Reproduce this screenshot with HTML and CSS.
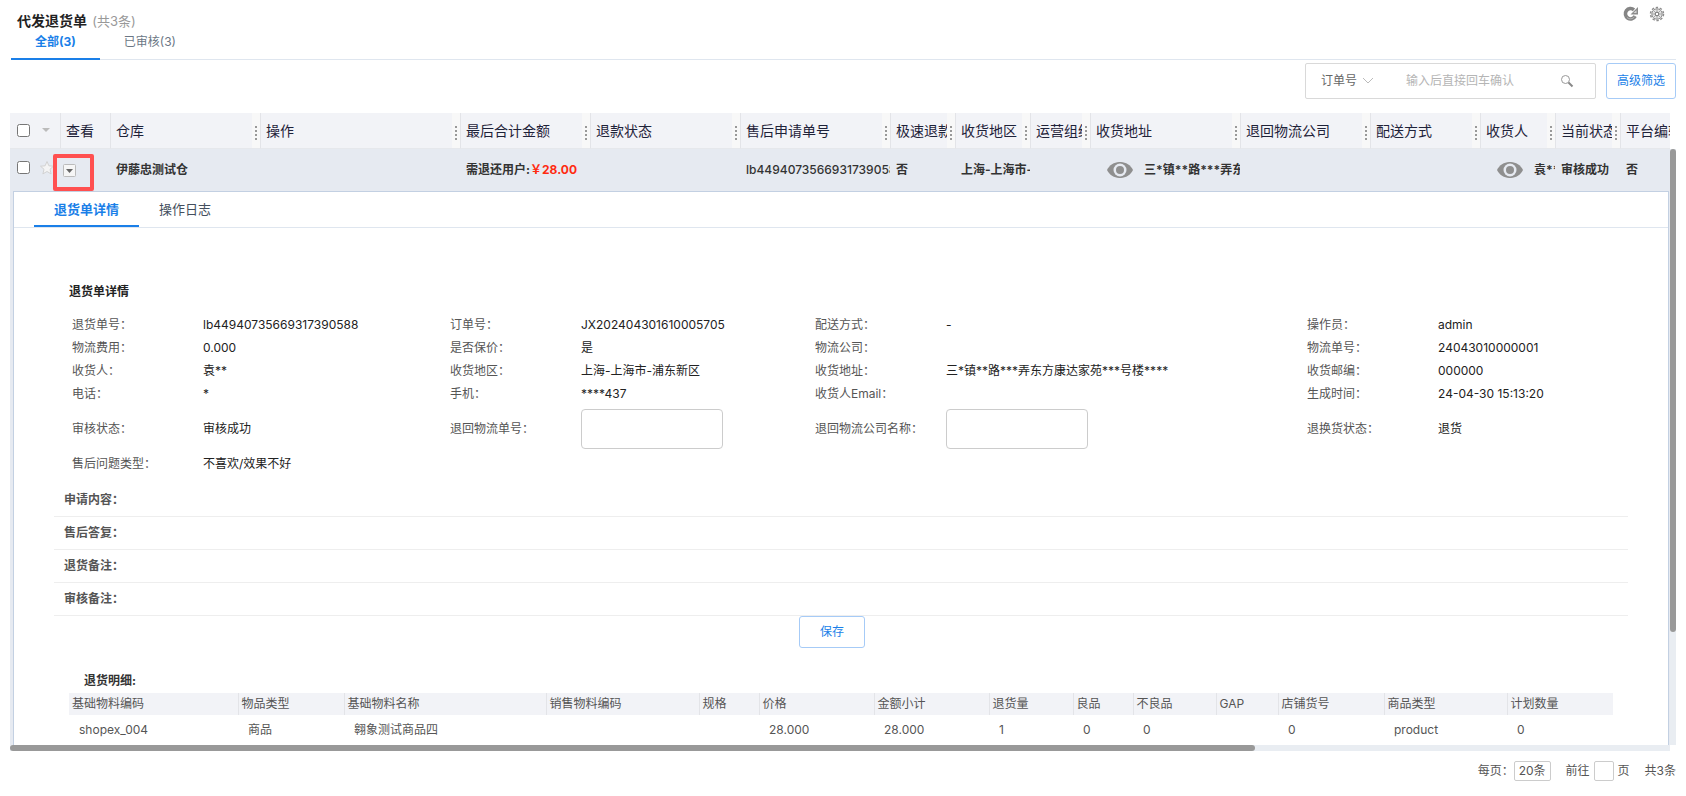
FILE: index.html
```html
<!DOCTYPE html>
<html lang="zh-CN">
<head>
    <meta charset="UTF-8">
    <meta name="viewport" content="width=device-width, initial-scale=1.0">
    <title>代发退货单</title>
    <link rel="stylesheet" href="styles.css">
</head>
<body>
    <header class="pageHead">
        <h1>代发退货单 <small>(共3条)</small></h1>
        <div class="pageTools">
            <button type="button" aria-label="刷新">
                <svg width="16" height="16" viewBox="0 0 16 16"><path d="M12.200 10.200A5.200 5.200 0 1 1 11 3.800" fill="none" stroke="#858585" stroke-width="3.600"/><path d="M11.500 10.800A5 5 0 0 1 4 11.500" fill="none" stroke="#b5b5b5"/><path d="M15 1v7.500H7.500z" fill="#8c8c8c"/><path d="M13.500 4.200v2.800h-3z" fill="#d5d5d5"/></svg>
            </button>
            <button type="button" aria-label="设置">
                <svg width="16" height="16" viewBox="0 0 16 16"><circle cx="8" cy="8" r="6.500" fill="none" stroke="#8c8c8c" stroke-width="1.500" stroke-dasharray="2.400 1.680"/><circle cx="8" cy="8" r="5.200" fill="#e4e4e4" stroke="#909090"/><path d="M8 3v10M3 8h10M4.500 4.500l7 7M11.500 4.500l-7 7" stroke="#aaa"/><circle cx="8" cy="8" r="1.800" fill="#fff" stroke="#777"/></svg>
            </button>
        </div>
    </header>
    <nav class="tabs">
        <a class="active" href="#">全部(3)</a>
        <a href="#">已审核(3)</a>
    </nav>
    <form class="filters">
        <div class="searchBox">
            <button class="searchType" type="button">订单号
                <svg width="12" height="8" viewBox="0 0 12 8"><path d="M1 1l5 5 5-5" fill="none" stroke="#bbb"/></svg>
            </button>
            <input type="text" aria-label="订单号" placeholder="输入后直接回车确认">
            <button class="searchGo" type="submit" aria-label="搜索">
                <svg width="14" height="14" viewBox="0 0 14 14"><circle cx="5.5" cy="5.5" r="4" fill="none" stroke="#999"/><path d="M8.5 8.5l4 4" stroke="#888" stroke-width="2"/></svg>
            </button>
        </div>
        <button class="btn btnFilter" type="button">高级筛选</button>
    </form>

    <div class="finder">
        <div class="finderView">
            <table class="grid">
                <colgroup>
                    <col class="w50"><col class="w50"><col class="w150"><col class="w200"><col class="w130"><col class="w150"><col class="w150"><col class="w65"><col class="w75"><col class="w60"><col class="w150"><col class="w130"><col class="w110"><col class="w75"><col class="w65"><col>
                </colgroup>
                <thead>
                    <tr>
                        <th class="pick"><div><input type="checkbox" aria-label="全选"><svg width="8" height="5" viewBox="0 0 8 5"><path d="M0 0h8L4 4z" fill="#bbb"/></svg></div></th>
                        <th>查看</th>
                        <th class="sizable">仓库</th>
                        <th class="sizable">操作</th>
                        <th class="sizable">最后合计金额</th>
                        <th class="sizable">退款状态</th>
                        <th class="sizable">售后申请单号</th>
                        <th class="sizable">极速退款</th>
                        <th class="sizable">收货地区</th>
                        <th class="sizable">运营组织</th>
                        <th class="sizable">收货地址</th>
                        <th class="sizable">退回物流公司</th>
                        <th class="sizable">配送方式</th>
                        <th class="sizable">收货人</th>
                        <th class="sizable">当前状态</th>
                        <th>平台编辑</th>
                    </tr>
                </thead>
                <tbody>
                    <tr>
                        <td class="pick"><div><input type="checkbox" aria-label="选择"><svg width="16" height="16" viewBox="0 0 16 16"><path d="M8 1.5l1.900 4.300 4.600.4-3.500 3.100 1.100 4.600L8 11.500l-4.100 2.400 1.100-4.600L1.500 6.200l4.600-.4z" fill="#f4f4f4" stroke="#d2d2d2"/></svg></div></td>
                        <td class="look"><button class="expand" type="button" aria-label="查看"><svg width="13" height="13" viewBox="0 0 13 13"><rect x=".5" y=".5" width="12" height="12" rx="1" fill="#f6f6f6" stroke="#bbb"/><path d="M3 5h7L6.500 9z" fill="#666"/></svg></button><span class="mark"></span></td>
                        <td>伊藤忠测试仓</td>
                        <td></td>
                        <td>需退还用户:<span class="price">￥28.00</span></td>
                        <td></td>
                        <td class="bn">lb44940735669317390588</td>
                        <td>否</td>
                        <td>上海-上海市-浦东新区</td>
                        <td></td>
                        <td><div class="masked"><svg width="26" height="16" viewBox="0 0 26 16"><path d="M0 8C5-2.700 21-2.700 26 8 21 18.700 5 18.700 0 8z" fill="#8f8f8f"/><circle cx="13" cy="8" r="6.500" fill="#e6eaf1"/><circle cx="13" cy="8" r="4" fill="#8f8f8f"/></svg>三*镇**路***弄东方康达家苑***号楼****</div></td>
                        <td></td>
                        <td></td>
                        <td><div class="masked"><svg width="26" height="16" viewBox="0 0 26 16"><path d="M0 8C5-2.700 21-2.700 26 8 21 18.700 5 18.700 0 8z" fill="#8f8f8f"/><circle cx="13" cy="8" r="6.500" fill="#e6eaf1"/><circle cx="13" cy="8" r="4" fill="#8f8f8f"/></svg>袁**</div></td>
                        <td>审核成功</td>
                        <td>否</td>
                    </tr>
                </tbody>
            </table>

            <section class="detail">
                <nav class="detailTabs">
                    <a class="active" href="#">退货单详情</a>
                    <a href="#">操作日志</a>
                </nav>
                <div class="detailBody">
                    <h2>退货单详情</h2>
                    <table class="info">
                        <colgroup>
                            <col class="infoLabel"><col class="infoA"><col class="infoLabel"><col class="infoB"><col class="infoLabel"><col class="infoC"><col class="infoLabel"><col>
                        </colgroup>
                        <tr>
                            <th>退货单号：</th><td>lb44940735669317390588</td>
                            <th>订单号：</th><td>JX202404301610005705</td>
                            <th>配送方式：</th><td>-</td>
                            <th>操作员：</th><td>admin</td>
                        </tr>
                        <tr>
                            <th>物流费用：</th><td>0.000</td>
                            <th>是否保价：</th><td>是</td>
                            <th>物流公司：</th><td></td>
                            <th>物流单号：</th><td>24043010000001</td>
                        </tr>
                        <tr>
                            <th>收货人：</th><td>袁**</td>
                            <th>收货地区：</th><td>上海-上海市-浦东新区</td>
                            <th>收货地址：</th><td>三*镇**路***弄东方康达家苑***号楼****</td>
                            <th>收货邮编：</th><td>000000</td>
                        </tr>
                        <tr>
                            <th>电话：</th><td>*</td>
                            <th>手机：</th><td>****437</td>
                            <th>收货人Email：</th><td></td>
                            <th>生成时间：</th><td>24-04-30 15:13:20</td>
                        </tr>
                        <tr class="inputs">
                            <th>审核状态：</th><td>审核成功</td>
                            <th><label for="logiNo">退回物流单号：</label></th><td><input type="text" id="logiNo"></td>
                            <th><label for="logiName">退回物流公司名称：</label></th><td><input type="text" id="logiName"></td>
                            <th>退换货状态：</th><td>退货</td>
                        </tr>
                        <tr>
                            <th>售后问题类型：</th><td colspan="7">不喜欢/效果不好</td>
                        </tr>
                    </table>
                    <ul class="notes">
                        <li>申请内容：</li>
                        <li>售后答复：</li>
                        <li>退货备注：</li>
                        <li>审核备注：</li>
                    </ul>
                    <div class="actions"><button class="btn btnSave" type="button">保存</button></div>
                    <h3>退货明细:</h3>
                    <table class="items">
                        <colgroup>
                            <col class="w169"><col class="w106"><col class="w202"><col class="w153"><col class="w60"><col class="w115"><col class="w115"><col class="w84"><col class="w60"><col class="w83"><col class="w62"><col class="w106"><col class="w123"><col>
                        </colgroup>
                        <thead>
                            <tr>
                                <th>基础物料编码</th><th>物品类型</th><th>基础物料名称</th><th>销售物料编码</th><th>规格</th><th>价格</th><th>金额小计</th><th>退货量</th><th>良品</th><th>不良品</th><th>GAP</th><th>店铺货号</th><th>商品类型</th><th>计划数量</th>
                            </tr>
                        </thead>
                        <tbody>
                            <tr>
                                <td>shopex_004</td><td>商品</td><td>翱象测试商品四</td><td></td><td></td><td>28.000</td><td>28.000</td><td>1</td><td>0</td><td>0</td><td></td><td>0</td><td>product</td><td>0</td>
                            </tr>
                        </tbody>
                    </table>
                </div>
            </section>
        </div>
        <div class="scrollY"><div></div></div>
        <div class="scrollX"><div></div></div>
    </div>

    <footer class="pager">
        <div class="pageSize"><span>每页：</span><button type="button">20条</button></div>
        <div><label for="pageNo">前往</label><input type="text" id="pageNo"><span>页</span></div>
        <span>共3条</span>
    </footer>
</body>
</html>
```
FILE: styles.css
```css
* {
    box-sizing: border-box;
}
body {
    margin: 0;
    padding: 0 10px;
    background-color: #fff;
    color: #222;
    font: 12px/18px Inter, "Noto Sans CJK SC", sans-serif;
}
button, input {
    font: inherit;
    color: inherit;
    margin: 0;
}
button {
    padding: 0;
    border: 0;
    background: none;
}
a {
    text-decoration: none;
    color: inherit;
}
svg {
    display: block;
    flex: none;
}
table {
    width: 100%;
    border-collapse: collapse;
    table-layout: fixed;
}
th, td {
    padding: 0;
    text-align: left;
    white-space: nowrap;
}

/* title */
.pageHead {
    display: flex;
    justify-content: space-between;
    padding: 6px 11px 0 7px;
    height: 32px;
}
.pageHead h1 {
    margin: 0;
    padding-top: 5px;
    font-size: 14px;
    line-height: 20px;
}
.pageHead small {
    margin-left: 2px;
    font-size: 13px;
    font-weight: normal;
    color: #999;
}
.pageTools {
    display: flex;
    gap: 10px;
    height: 16px;
}
.tabs {
    display: flex;
    height: 28px;
    margin-left: 1px;
    border-bottom: 1px solid #dfe6ef;
    color: #6b7785;
}
.tabs a {
    height: 28px;
    padding: 0 24px;
    line-height: 20px;
}
.tabs .active, .detailTabs .active {
    border-bottom: 2px solid #1a7fe8;
    color: #1a7fe8;
    font-weight: bold;
}

/* search */
.filters {
    display: flex;
    justify-content: flex-end;
    align-items: center;
    gap: 10px;
    padding: 3px 0 14px;
}
.searchBox {
    display: flex;
    align-items: center;
    width: 291px;
    height: 36px;
    padding: 0 21px 0 15px;
    border: 1px solid #d9d9d9;
    border-radius: 2px;
}
.searchType {
    display: flex;
    align-items: center;
    gap: 5px;
    color: #666;
}
.searchBox input {
    flex: 1;
    min-width: 0;
    padding: 0 0 0 32px;
    border: 0;
    outline: 0;
}
.searchBox input::placeholder {
    color: #b5b5b5;
}
.btn {
    border: 1px solid #a6cbf7;
    border-radius: 3px;
    background-color: #fff;
    color: #1a7fe8;
}
.btnFilter {
    width: 70px;
    height: 36px;
}
.btnSave {
    width: 66px;
    height: 32px;
}

/* list */
.finder {
    display: grid;
    grid-template-columns: minmax(0, 1fr) 6px;
    grid-template-rows: auto 6px;
}
.finderView {
    overflow: hidden;
    background-color: #e6eaf1;
}
.scrollY {
    margin-top: 36px;
    background-color: #e9edf2;
}
.scrollY div {
    height: 81%;
    border-radius: 3px;
    background-color: #999;
}
.scrollX {
    background-color: #e9edf2;
}
.scrollX div {
    width: 75%;
    height: 6px;
    border-radius: 3px;
    background-color: #999;
}
.w50 { width: 50px; }
.w60 { width: 60px; }
.w62 { width: 62px; }
.w65 { width: 65px; }
.w75 { width: 75px; }
.w83 { width: 83px; }
.w84 { width: 84px; }
.w106 { width: 106px; }
.w110 { width: 110px; }
.w115 { width: 115px; }
.w123 { width: 123px; }
.w130 { width: 130px; }
.w150 { width: 150px; }
.w153 { width: 153px; }
.w169 { width: 169px; }
.w200 { width: 200px; }
.w202 { width: 202px; }

.grid {
    border-collapse: separate;
    border-spacing: 0;
}
.grid th, .grid td {
    padding-left: 6px;
    overflow: hidden;
}
.grid th {
    height: 36px;
    border-left: 1px solid #e3e4e8;
    border-bottom: 1px solid #e6e8ec;
    padding-left: 5px;
    background-color: #f2f3f7;
    color: #1e2239;
    font-size: 14px;
    font-weight: normal;
}
.sizable {
    position: relative;
}
/* drag handle: pale strip with four dots */
.sizable::after {
    content: "";
    position: absolute;
    top: 0;
    right: 0;
    bottom: 0;
    width: 8px;
    background: repeating-linear-gradient(#999 0 2px, #f8f8f8 2px 4px) 3px 13px / 2px 14px no-repeat #f8f8f8;
}
.grid td {
    height: 42px;
    color: #333;
    font-weight: bold;
}
.grid .bn {
    font-weight: 500;
}
.grid .pick {
    border-left: 0;
    padding-left: 7px;
}
.pick div {
    display: flex;
    align-items: center;
    gap: 12px;
}
.pick input {
    flex: none;
    width: 13px;
    height: 13px;
}
.grid td.pick {
    padding-bottom: 5px;
}
td.pick div {
    gap: 9px;
}
.grid .look {
    position: relative;
    padding: 0 0 0 3px;
    overflow: visible;
}
.expand {
    display: block;
}
.mark {
    position: absolute;
    top: 5px;
    left: -7px;
    width: 41px;
    height: 37px;
    border: 4px solid #ff5050;
    border-radius: 2px;
    pointer-events: none;
}
.price {
    color: #ff2a12;
}
.masked {
    display: flex;
    align-items: center;
    gap: 11px;
    padding-left: 11px;
}

/* expanded row */
.detail {
    margin: 0 1px 0 3px;
    border: 1px solid #c3d0e2;
    border-bottom: 0;
    background-color: #fff;
}
.detailTabs {
    display: flex;
    height: 36px;
    padding-left: 20px;
    border-bottom: 1px solid #dfe6ef;
    font-size: 13px;
    line-height: 34px;
    color: #444f5e;
}
.detailTabs a {
    height: 35px;
    padding: 0 20px;
}
.detailBody {
    padding: 55px 40px 0;
}
.detailBody h2 {
    margin: 0 0 12px 15px;
    font-size: 12px;
    line-height: 18px;
}
.info {
    margin-left: 18px;
    width: calc(100% - 18px);
}
.infoLabel { width: 131px; }
.infoA { width: 247px; }
.infoB { width: 234px; }
.infoC { width: 361px; }
.info th, .info td {
    height: 23px;
}
.info th {
    color: #555;
    font-weight: normal;
}
.info .inputs td, .info .inputs th {
    height: 47px;
}
.info input {
    display: block;
    width: 142px;
    height: 40px;
    padding: 0 8px;
    border: 1px solid #ccc;
    border-radius: 4px;
}
.notes {
    list-style: none;
    margin: 9px 0 0;
    padding: 0;
}
.notes li {
    height: 33px;
    padding-left: 10px;
    border-bottom: 1px solid #eee;
    color: #555;
    font-weight: bold;
    line-height: 32px;
}
.actions {
    padding-right: 18px;
}
.actions .btn {
    display: block;
    margin: 0 auto;
}
.detailBody h3 {
    margin: 24px 0 3px 30px;
    font-size: 12px;
    line-height: 18px;
    color: #333;
}
.items {
    margin-left: 15px;
    width: calc(100% - 30px);
    color: #555;
}
.items th {
    height: 22px;
    padding-left: 3px;
    border-left: 1px solid #e3e4e8;
    background-color: #f2f3f7;
    font-weight: normal;
}
.items th:first-child {
    border-left: 0;
}
.items td {
    height: 30px;
    padding-left: 10px;
}

/* paging */
.pager {
    display: flex;
    justify-content: flex-end;
    align-items: center;
    gap: 15px;
    padding-top: 10px;
    color: #555;
}
.pager div {
    display: flex;
    align-items: center;
    gap: 4px;
}
.pager .pageSize {
    gap: 0;
}
.pager button, .pager input {
    height: 20px;
    border: 1px solid #ccc;
    border-radius: 2px;
}
.pager button {
    padding: 0 4px;
}
.pager input {
    width: 20px;
    padding: 0;
}
```
